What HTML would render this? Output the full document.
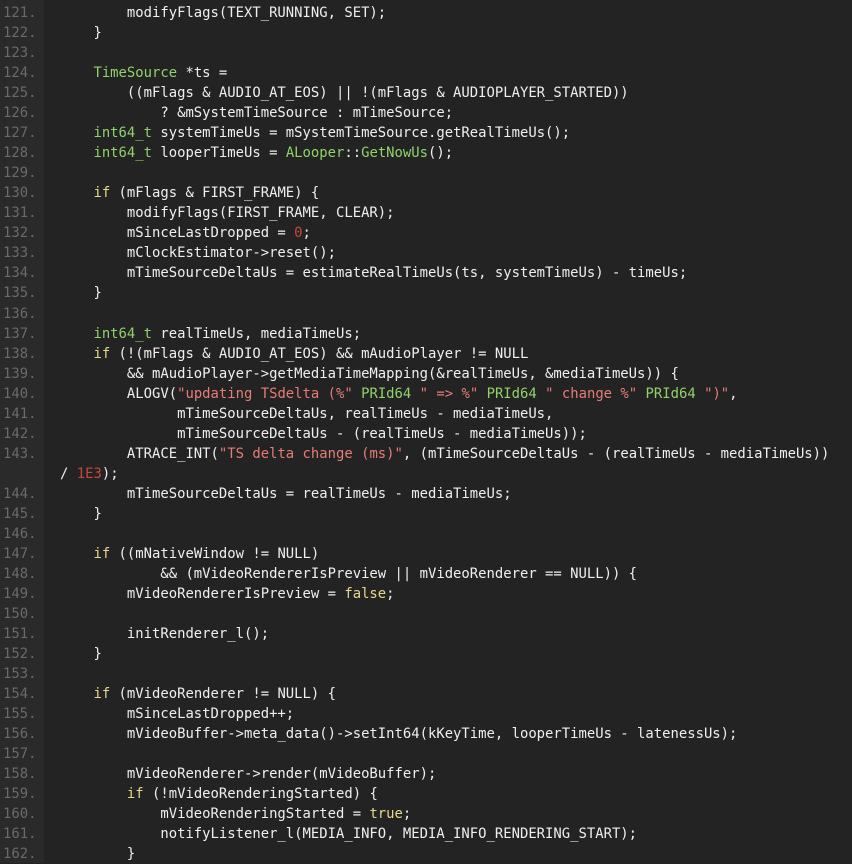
<!DOCTYPE html>
<html><head><meta charset="utf-8"><style>
html,body{margin:0;padding:0;background:#232323;width:852px;height:863px;overflow:hidden}
#g{position:absolute;left:0;top:0;width:44px;height:863px;background:#2a2a2a}
.r{position:absolute;left:0;height:20px;line-height:20px;font-family:"DejaVu Sans Mono","Liberation Mono",monospace;font-size:13.9px;color:#efefef;white-space:pre}
.n{position:absolute;left:3px;color:#6a6a6a}
.c{position:absolute;left:60px}
.k{color:#e8d98a}.t{color:#8fd36a}.s{color:#e57d74}.m{color:#c8473b}
</style></head><body><div id="g"></div>
<div id="code"></div>
<script>
var L=[
["121.","        modifyFlags(TEXT_RUNNING, SET);"],
["122.","    }"],
["123.",""],
["124.","    <span class=t>TimeSource</span> *ts ="],
["125.","        ((mFlags &amp; AUDIO_AT_EOS) || !(mFlags &amp; AUDIOPLAYER_STARTED))"],
["126.","            ? &amp;mSystemTimeSource : mTimeSource;"],
["127.","    <span class=t>int64_t</span> systemTimeUs = mSystemTimeSource.getRealTimeUs();"],
["128.","    <span class=t>int64_t</span> looperTimeUs = <span class=t>ALooper</span>::<span class=t>GetNowUs</span>();"],
["129.",""],
["130.","    <span class=k>if</span> (mFlags &amp; FIRST_FRAME) {"],
["131.","        modifyFlags(FIRST_FRAME, CLEAR);"],
["132.","        mSinceLastDropped = <span class=m>0</span>;"],
["133.","        mClockEstimator-&gt;reset();"],
["134.","        mTimeSourceDeltaUs = estimateRealTimeUs(ts, systemTimeUs) - timeUs;"],
["135.","    }"],
["136.",""],
["137.","    <span class=t>int64_t</span> realTimeUs, mediaTimeUs;"],
["138.","    <span class=k>if</span> (!(mFlags &amp; AUDIO_AT_EOS) &amp;&amp; mAudioPlayer != NULL"],
["139.","        &amp;&amp; mAudioPlayer-&gt;getMediaTimeMapping(&amp;realTimeUs, &amp;mediaTimeUs)) {"],
["140.","        ALOGV(<span class=s>\"updating TSdelta (%\"</span> <span class=t>PRId64</span> <span class=s>\" =&gt; %\"</span> <span class=t>PRId64</span> <span class=s>\" change %\"</span> <span class=t>PRId64</span> <span class=s>\")\"</span>,"],
["141.","              mTimeSourceDeltaUs, realTimeUs - mediaTimeUs,"],
["142.","              mTimeSourceDeltaUs - (realTimeUs - mediaTimeUs));"],
["143.","        ATRACE_INT(<span class=s>\"TS delta change (ms)\"</span>, (mTimeSourceDeltaUs - (realTimeUs - mediaTimeUs))"],
["","/ <span class=m>1E3</span>);"],
["144.","        mTimeSourceDeltaUs = realTimeUs - mediaTimeUs;"],
["145.","    }"],
["146.",""],
["147.","    <span class=k>if</span> ((mNativeWindow != NULL)"],
["148.","            &amp;&amp; (mVideoRendererIsPreview || mVideoRenderer == NULL)) {"],
["149.","        mVideoRendererIsPreview = <span class=k>false</span>;"],
["150.",""],
["151.","        initRenderer_l();"],
["152.","    }"],
["153.",""],
["154.","    <span class=k>if</span> (mVideoRenderer != NULL) {"],
["155.","        mSinceLastDropped++;"],
["156.","        mVideoBuffer-&gt;meta_data()-&gt;setInt64(kKeyTime, looperTimeUs - latenessUs);"],
["157.",""],
["158.","        mVideoRenderer-&gt;render(mVideoBuffer);"],
["159.","        <span class=k>if</span> (!mVideoRenderingStarted) {"],
["160.","            mVideoRenderingStarted = <span class=k>true</span>;"],
["161.","            notifyListener_l(MEDIA_INFO, MEDIA_INFO_RENDERING_START);"],
["162.","        }"]
];
var h="";
for(var i=0;i<L.length;i++){h+='<div class=r style="top:'+(3+i*20.03).toFixed(1)+'px"><span class=n>'+L[i][0]+'</span><span class=c>'+L[i][1]+'</span></div>';}
document.getElementById("code").innerHTML=h;
</script>
</body></html>
